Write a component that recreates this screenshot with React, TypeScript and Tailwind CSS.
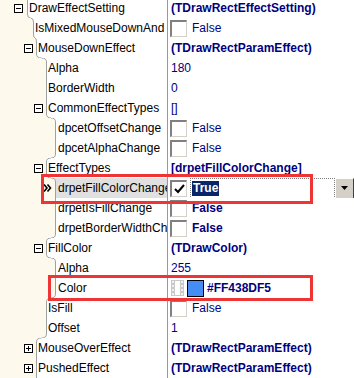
import React from 'react';

type Row = {
  name: string;
  line: number;
  box?: 'minus' | 'plus';
  boxCls?: string;
  textCls: string;
  value: React.ReactNode;
  selected?: boolean;
  pointer?: boolean;
};

const navy = 'text-[#000080]';

const Check = ({ checked }: { checked?: boolean }) => (
  <div className="w-[17px] h-[17px] shrink-0 bg-white border-l-2 border-t-2 border-l-[#808080] border-t-[#808080] border-r border-b border-r-[#d4d0c8] border-b-[#d4d0c8] flex items-center justify-center">
    {checked && (
      <svg width="11" height="10" viewBox="0 0 11 10">
        <path d="M1 5 L4 8 L10 1" stroke="#000" strokeWidth="2" fill="none" />
      </svg>
    )}
  </div>
);

const BoolValue = ({ bold }: { bold?: boolean }) => (
  <div className="flex items-center h-5">
    <Check />
    <span className={`ml-[5px] ${navy} ${bold ? 'font-bold' : ''}`}>False</span>
  </div>
);

const Text = ({ children, bold }: { children: React.ReactNode; bold?: boolean }) => (
  <span className={`ml-[1px] ${navy} ${bold ? 'font-bold' : ''}`}>{children}</span>
);

const FillValue = () => (
  <div className="flex items-center h-5 w-full">
    <Check checked />
    <div className="ml-[3px] flex-1 h-[21px] border border-dotted border-[#808080] flex items-center pl-[1px]">
      <span className="bg-[#0a246a] text-white font-bold px-[1px] leading-[15px]">True</span>
    </div>
    <div className="w-[19px] h-[21px] shrink-0 bg-[#d4d0c8] border-t border-l border-t-white border-l-white border-r border-b border-r-[#404040] border-b-[#404040] flex items-center justify-center">
      <svg width="7" height="4" viewBox="0 0 7 4">
        <path d="M0 0 H7 L3.5 4 Z" fill="#000" />
      </svg>
    </div>
  </div>
);

const ColorValue = () => (
  <div className="flex items-center h-5">
    <svg width="13" height="16" viewBox="0 0 13 16" className="ml-[1px]">
      <rect x="0.5" y="0.5" width="12" height="15" fill="#f0f0f0" stroke="#c8c8c8" />
      <rect x="3.5" y="0.5" width="6" height="15" fill="#fff" stroke="#c8c8c8" />
      <rect x="1" y="3" width="2" height="2" fill="#c8c8c8" />
      <rect x="1" y="7" width="2" height="2" fill="#c8c8c8" />
      <rect x="1" y="11" width="2" height="2" fill="#c8c8c8" />
      <rect x="10" y="3" width="2" height="2" fill="#c8c8c8" />
      <rect x="10" y="7" width="2" height="2" fill="#c8c8c8" />
      <rect x="10" y="11" width="2" height="2" fill="#c8c8c8" />
    </svg>
    <div className="ml-[3px] w-[17px] h-[17px] border border-black bg-[#438df5]" />
    <span className={`ml-[3px] ${navy} font-bold`}>#FF438DF5</span>
  </div>
);

const rows: Row[] = [
  { name: 'DrawEffectSetting', line: 27, box: 'minus', boxCls: 'ml-[14px]', textCls: 'ml-[6px]', value: <Text bold>(TDrawRectEffectSetting)</Text> },
  { name: 'IsMixedMouseDownAnd', line: 33, textCls: 'ml-[35px]', value: <BoolValue /> },
  { name: 'MouseDownEffect', line: 36, box: 'minus', boxCls: 'ml-[24px]', textCls: 'ml-[5px]', value: <Text bold>(TDrawRectParamEffect)</Text> },
  { name: 'Alpha', line: 46, textCls: 'ml-[48px]', value: <Text>180</Text> },
  { name: 'BorderWidth', line: 46, textCls: 'ml-[48px]', value: <Text>0</Text> },
  { name: 'CommonEffectTypes', line: 46, box: 'minus', boxCls: 'ml-[34px]', textCls: 'ml-[5px]', value: <Text>[]</Text> },
  { name: 'dpcetOffsetChange', line: 55, textCls: 'ml-[58px]', value: <BoolValue /> },
  { name: 'dpcetAlphaChange', line: 55, textCls: 'ml-[58px]', value: <BoolValue /> },
  { name: 'EffectTypes', line: 46, box: 'minus', boxCls: 'ml-[34px]', textCls: 'ml-[5px]', value: <Text bold>[drpetFillColorChange]</Text> },
  { name: 'drpetFillColorChange', line: 55, pointer: true, selected: true, textCls: 'ml-[6px]', value: <FillValue /> },
  { name: 'drpetIsFillChange', line: 55, textCls: 'ml-[58px]', value: <BoolValue bold /> },
  { name: 'drpetBorderWidthCh', line: 55, textCls: 'ml-[58px]', value: <BoolValue bold /> },
  { name: 'FillColor', line: 46, box: 'minus', boxCls: 'ml-[34px]', textCls: 'ml-[5px]', value: <Text bold>(TDrawColor)</Text> },
  { name: 'Alpha', line: 55, textCls: 'ml-[58px]', value: <Text>255</Text> },
  { name: 'Color', line: 55, textCls: 'ml-[58px]', value: <ColorValue /> },
  { name: 'IsFill', line: 46, textCls: 'ml-[48px]', value: <BoolValue /> },
  { name: 'Offset', line: 46, textCls: 'ml-[48px]', value: <Text>1</Text> },
  { name: 'MouseOverEffect', line: 36, box: 'plus', boxCls: 'ml-[24px]', textCls: 'ml-[5px]', value: <Text bold>(TDrawRectParamEffect)</Text> },
  { name: 'PushedEffect', line: 36, box: 'plus', boxCls: 'ml-[24px]', textCls: 'ml-[5px]', value: <Text bold>(TDrawRectParamEffect)</Text> },
];

const TreeLine = ({ p, c, n }: { p: number; c: number; n: number }) => {
  const a = (p + c) / 2 + 0.5;
  const x = c + 0.5;
  const b = (c + n) / 2 + 0.5;
  const d = `M${a} 0 Q${x} 0 ${x} 4 L${x} 16 Q${x} 20 ${b} 20`;
  return (
    <svg className="absolute left-0 top-0" width="70" height="20" viewBox="0 0 70 20">
      <path d={`M0 0 L${a} 0 Q${x} 0 ${x} 4 L${x} 16 Q${x} 20 ${b} 20 L0 20 Z`} fill="#fdf9ec" />
      <path d={d} stroke="#a0a0a0" fill="none" />
    </svg>
  );
};

const ExpandBox = ({ kind, cls }: { kind: 'minus' | 'plus'; cls?: string }) => (
  <svg className={`relative shrink-0 ${cls}`} width="9" height="9" viewBox="0 0 9 9">
    <rect x="0.5" y="0.5" width="8" height="8" fill="#fff" stroke="#000" />
    <path d="M2 4.5 H7" stroke="#000" />
    {kind === 'plus' && <path d="M4.5 2 V7" stroke="#000" />}
  </svg>
);

export default function App() {
  return (
    <div className="w-[354px] h-[378px] overflow-hidden bg-white text-[12px] text-black font-['Liberation_Sans',sans-serif] relative">
      <div className="-mt-[2px]">
        {rows.map((r, i) => {
          const p = i > 0 ? rows[i - 1].line : r.line;
          const n = i < rows.length - 1 ? rows[i + 1].line : r.line;
          return (
            <div key={i} className="flex h-5">
              <div className={`relative w-[167px] shrink-0 flex items-center overflow-hidden whitespace-nowrap ${r.selected ? 'bg-[#e0e0e0]' : 'bg-white'}`}>
                <TreeLine p={p} c={r.line} n={n} />
                {r.box && <ExpandBox kind={r.box} cls={r.boxCls} />}
                {r.pointer && (
                  <svg className="relative ml-[43px] shrink-0" width="9" height="8" viewBox="0 0 9 8">
                    <path d="M1 0.5 L4 4 L1 7.5 M4.5 0.5 L7.5 4 L4.5 7.5" stroke="#000" strokeWidth="1.6" fill="none" />
                  </svg>
                )}
                <span className={`relative ${r.textCls}`}>{r.name}</span>
              </div>
              <div className="w-px bg-[#999] shrink-0" />
              <div className="flex-1 flex items-center pl-[2px] whitespace-nowrap overflow-hidden">{r.value}</div>
            </div>
          );
        })}
      </div>
      <div className="absolute left-[41px] top-[174px] w-[272px] h-[30px] border-[3px] border-[#ee3434] pointer-events-none" />
      <div className="absolute left-[48px] top-[275px] w-[265px] h-[26px] border-[3px] border-[#ee3434] pointer-events-none" />
    </div>
  );
}
